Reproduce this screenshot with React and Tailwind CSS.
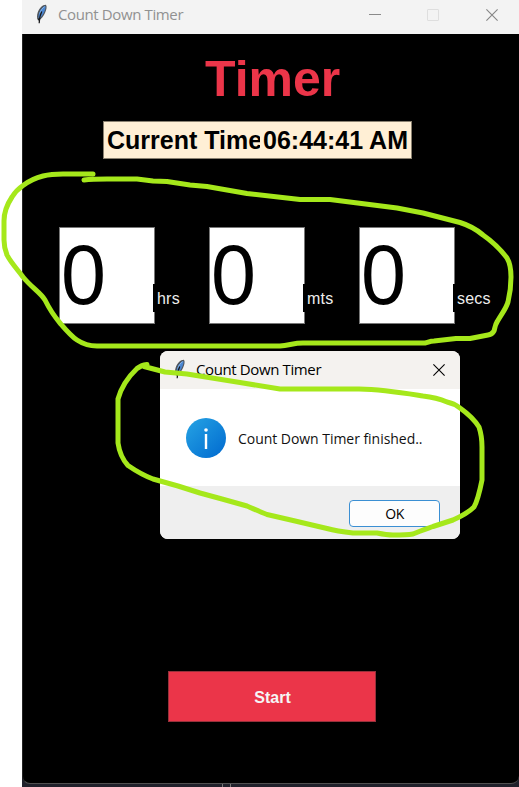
function Feather({ className }) {
  return (
    <svg viewBox="0 0 14 20" className={className} aria-hidden="true">
      <path d="M11 .7C7.500.6 4.200 4 2.700 8.500C1.800 11.300 1.700 14.300 2.900 16.200C6.200 15.600 8.800 12.200 10.200 8.600C11.300 5.900 12.300 2.600 11 .7Z" fill="#50565d" />
      <path d="M10.300 2C7.600 2.600 5.100 6 4 9.800C3.400 11.900 3.300 13.600 3.700 14.600C6.300 13.500 8.200 10.600 9.300 7.800C10.200 5.500 11 3.200 10.300 2Z" fill="#4a86d2" />
      <path d="M9.600 2.800C7.500 3.800 5.600 6.700 4.800 9.500" fill="none" stroke="#86b6ea" strokeWidth="1" />
      <path d="M6.800 7.500C5.200 10.500 4.300 14 4.200 19.300" fill="none" stroke="#17181b" strokeWidth="1.200" />
      <path d="M2.500 14.500L4 17L5.600 14.800Z" fill="#17181b" />
    </svg>
  );
}

function CloseIcon({ className }) {
  return (
    <svg viewBox="0 0 12 12" className={className} fill="none" stroke="currentColor" strokeWidth="1.1">
      <path d="M.4.4 11.600 11.600M11.600.4.4 11.600" />
    </svg>
  );
}

function TimeField({ unit }) {
  return (
    <div className="flex h-[97px] w-[150px] items-start">
      <div className="h-[97px] w-[96px] shrink-0 border border-[#777] bg-white pl-[1px] font-['Liberation_Sans',Arial,sans-serif] text-[86px] leading-[93px] text-black">
        <span className="inline-block origin-left scale-x-[0.94]">0</span>
      </div>
      <div className="relative -ml-[2px] mt-[57px] h-[28px] bg-black pl-[4px] font-['Liberation_Sans',Arial,sans-serif] text-[16px] leading-[29px] tracking-[0.2px] text-[#eee]">
        {unit}
      </div>
    </div>
  );
}

function FinishedDialog() {
  return (
    <div className="absolute left-[160px] top-[351px] flex h-[188px] w-[300px] flex-col overflow-hidden rounded-lg bg-white font-['Open_Sans','Noto_Sans',sans-serif] text-black">
      <div className="flex h-[38px] shrink-0 items-center bg-[#f4f2ef] pl-[13px] pr-[15px]">
        <Feather className="-mt-[2px] h-[20px] w-[14px] shrink-0" />
        <span className="-mt-[2px] ml-[9px] whitespace-nowrap text-[15px] tracking-[-0.38px]">Count Down Timer</span>
        <CloseIcon className="ml-auto h-[12px] w-[12px]" />
      </div>
      <div className="flex h-[97px] shrink-0 items-center pl-[26px]">
        <svg viewBox="0 0 40 40" className="h-[40px] w-[40px] shrink-0">
          <defs>
            <linearGradient id="info" x1="0" y1="0" x2="1" y2="1">
              <stop offset="0" stopColor="#26a4e4" />
              <stop offset="1" stopColor="#0069cf" />
            </linearGradient>
          </defs>
          <circle cx="20" cy="20" r="20" fill="url(#info)" />
          <circle cx="20" cy="12" r="1.800" fill="white" />
          <path d="M20 16V31" stroke="white" strokeWidth="2.400" />
        </svg>
        <span className="ml-[12px] mt-[2px] whitespace-nowrap text-[14px] tracking-[-0.04px] text-[#111]">Count Down Timer finished..</span>
      </div>
      <div className="flex grow items-start justify-end bg-[#efefef] pr-[20px] pt-[14px]">
        <button className="h-[27px] w-[91px] rounded-[4px] border-[1.5px] border-[#3b8fd3] bg-[#fdfdfd] text-[14px] leading-[25px] tracking-[-0.5px]">OK</button>
      </div>
    </div>
  );
}

export default function App() {
  return (
    <div className="relative h-[787px] w-[519px] overflow-hidden bg-white pl-[22px]">
      <div className="flex h-[787px] flex-col bg-[#20212b]">
        <div className="flex h-[34px] shrink-0 items-center bg-[#f3f3f3] pb-[5px] pl-[13px] pr-[21px] font-['Open_Sans','Noto_Sans',sans-serif] text-[#919191]">
          <Feather className="-mt-[2px] h-[20px] w-[14px] shrink-0" />
          <span className="ml-[9px] whitespace-nowrap text-[15px] tracking-[-0.38px]">Count Down Timer</span>
          <div className="ml-auto flex items-center">
            <div className="h-px w-[12px] bg-[#8a8a8a]" />
            <div className="ml-[46px] h-[12px] w-[12px] rounded-[1px] border border-[#dedede]" />
            <CloseIcon className="ml-[47px] h-[12px] w-[12px] text-[#858585]" />
          </div>
        </div>
        <div className="flex h-[750px] shrink-0 flex-col rounded-b-lg border-b border-l border-b-[#505050] border-l-[#242424] bg-black font-['Liberation_Sans',Arial,sans-serif]">
          <h1 className="ml-[182px] mt-[16px] h-[58px] text-[50px] font-bold leading-[58px] text-[#eb3549]">Timer</h1>
          <div className="ml-[80px] mt-[13px] flex h-[38px] w-[309px] shrink-0 border border-[#8a8170] bg-[#ffefd5] text-[25px] font-bold leading-[37px] text-black">
            <span className="ml-[3px] w-[153px] whitespace-nowrap">Current Time</span>
            <span className="relative h-[36px] whitespace-nowrap bg-[#ffefd5] pl-[3px]">06:44:41 AM</span>
          </div>
          <div className="ml-[36px] mt-[68px] flex shrink-0">
            <TimeField unit="hrs" />
            <TimeField unit="mts" />
            <TimeField unit="secs" />
          </div>
          <button className="ml-[145px] mt-[347px] h-[51px] w-[208px] shrink-0 border border-[#96313b] bg-[#eb3549] pl-[1px] pt-[2px] text-[16px] font-bold text-[#f5f5f5]">
            Start
          </button>
        </div>
        <div className="ml-[200px] flex h-[3px] w-[9px] border-x border-[#777]" />
      </div>
      <FinishedDialog />
      <svg viewBox="0 0 519 787" className="pointer-events-none absolute left-0 top-0 h-[787px] w-[519px]" fill="none" stroke="#a5e81b" strokeWidth="5" strokeLinecap="round" strokeLinejoin="round">
        <path d="M93 174H63C55 174 49 174.500 43 176C35 178 29 181 23 185.500C18 189 15 192 12 197C6 206 4 213 4 221V240C4 246 5 250 7 255C11 263 18 270 23 277C32 288 40 292 45 300C49 308 54 316 60 323C66 330 71 336 77 340C83 344 88 346 97 346H280C290 345 294 343 303 343H425C429 342 430 341 434 341L456 338.500H470L488 335C492 334.500 492.500 333 494 331C495 328 495 325 497 322C502 313 506 309 508 302C510 294 511 286 511 277C511 270 510 263 507 258C501 250 493 242 483 235C476 229 468 225 460 222.500L423 213L397 208L330 199.500H300L247 193.500L207 186.500L190 185L167 181.500L153 181L137 179H107C98 179 92 179 84 180" />
        <path d="M147 364.500C143 365 140 366 137 368.500C127 378 121 388 118 399V443C119 450 122 459 128 465.500C136 471 145 476 153 479L178 486L200 493L222 499L247 506C254 509 260 512 267 514.500L293 520.500L327 528.500C336 531 344 532 353 533H377C382 534 387 535 393 535C400 535 407 535 413 534C420 531 426 529 433 526.500L453 520C462 516 469 512 474 507C478 500 480 490 482 480V447C482 439 481 433 479 427C474 419 467 413 460 408C456 405 452 403 447 402C440 399 432 397 423 396C404 393 384 389.500 359 389H280L240 382.500L187 374L165 372L144 366.500" />
      </svg>
    </div>
  );
}
